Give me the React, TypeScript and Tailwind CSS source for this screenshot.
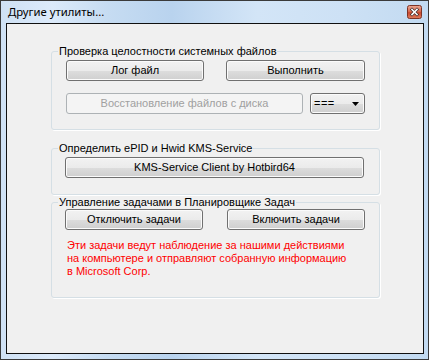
import React from "react";

const Btn = ({ children, className = "" }: { children: React.ReactNode; className?: string }) => (
  <div
    className={`flex h-[21px] shrink-0 items-center justify-center rounded-[3px] border border-[#707070] bg-[linear-gradient(#f2f2f2_0%,#ebebeb_50%,#dddddd_51%,#cfcfcf_100%)] text-[11px] text-black shadow-[inset_0_0_0_1px_#fbfbfb] ${className}`}
  >
    {children}
  </div>
);

const Combo = () => (
  <div className="flex h-[21px] w-[55px] shrink-0 items-center justify-between rounded-[3px] border border-[#707070] bg-[linear-gradient(#f2f2f2_0%,#ebebeb_50%,#dddddd_51%,#cfcfcf_100%)] pl-[3px] pr-[5px] text-[11px] text-black shadow-[inset_0_0_0_1px_#fbfbfb]">
    <span className="tracking-[0.5px]">===</span>
    <svg width="7" height="4" viewBox="0 0 7 4">
      <path d="M0 0 H7 L3.5 4 Z" fill="#000" />
    </svg>
  </div>
);

const Group = ({ title, children, className = "" }: { title: string; children: React.ReactNode; className?: string }) => (
  <fieldset className={`w-[329px] rounded-[3px] border border-[#d5dfe5] shadow-[1px_1px_0_#ffffff] ${className}`}>
    <legend className="ml-[6px] px-[1px] text-[11px] leading-[13px] text-black">{title}</legend>
    {children}
  </fieldset>
);

const CloseButton = () => (
  <svg width="15" height="14" viewBox="0 0 15 14" className="mt-[-1px]">
    <defs>
      <linearGradient id="cb" x1="0" y1="0" x2="0" y2="1">
        <stop offset="0" stopColor="#eba994" />
        <stop offset="0.45" stopColor="#d86c52" />
        <stop offset="0.55" stopColor="#c9472d" />
        <stop offset="1" stopColor="#e07e5e" />
      </linearGradient>
    </defs>
    <rect x="0.5" y="0.5" width="14" height="13" rx="2" fill="url(#cb)" stroke="#7d3326" />
    <path d="M5 4.5 L10 9.5 M10 4.5 L5 9.5" stroke="#3a2a2a" strokeWidth="3" strokeLinecap="square" />
    <path d="M5 4.5 L10 9.5 M10 4.5 L5 9.5" stroke="#ffffff" strokeWidth="1.6" strokeLinecap="square" />
  </svg>
);

export default function App() {
  return (
    <div className="h-[361px] w-[430px] bg-white font-['Liberation_Sans',Arial,sans-serif]">
      <div className="flex h-[360px] w-[429px] flex-col border border-[#3a3a3a] bg-[linear-gradient(90deg,#cfe1f4_0%,#dceafa_12%,#c6dcf2_25%,#b9d3ee_40%,#d3e5f7_60%,#cde1f5_80%,#c2daf1_100%)] pb-[5px] pl-[5px] pr-[4px]">
        {/* title bar */}
        <div className="flex h-[22px] shrink-0 items-center justify-between pl-[2px] pr-[2px]">
          <span className="font-['Noto_Sans',sans-serif] text-[11.3px] leading-[16px] text-black">Другие утилиты...</span>
          <CloseButton />
        </div>
        {/* client area */}
        <div className="flex flex-1 flex-col border border-[#101010] bg-[#f0f0f0] pl-[44px] pt-[21px]">
          <Group title="Проверка целостности системных файлов" className="pb-[15px]">
            <div className="flex flex-col gap-[12px] pl-[14px] pt-[2px]">
              <div className="flex gap-[22px]">
                <Btn className="w-[138px]">Лог файл</Btn>
                <Btn className="w-[139px]">Выполнить</Btn>
              </div>
              <div className="flex gap-[7px]">
                <div className="flex h-[21px] w-[237px] items-center justify-center rounded-[3px] border border-[#adb2b5] bg-[#f4f4f4] text-[11px] text-[#a0a0a0]">
                  Восстановление файлов с диска
                </div>
                <Combo />
              </div>
            </div>
          </Group>

          <Group title="Определить ePID и Hwid KMS-Service" className="mt-[12px] pb-[16px]">
            <div className="pl-[13px] pt-[2px]">
              <Btn className="w-[299px]">KMS-Service Client by Hotbird64</Btn>
            </div>
          </Group>

          <Group title="Управление задачами в Планировщике Задач" className="mt-[1px] pb-[19px]">
            <div className="flex gap-[24px] pl-[13px]">
              <Btn className="w-[138px]">Отключить задачи</Btn>
              <Btn className="w-[138px]">Включить задачи</Btn>
            </div>
            <p className="mt-[9px] pl-[15px] text-[11px] leading-[13px] text-[#ff0000]">
              Эти задачи ведут наблюдение за нашими действиями
              <br />
              на компьютере и отправляют собранную информацию
              <br />в Microsoft Corp.
            </p>
          </Group>
        </div>
      </div>
    </div>
  );
}
